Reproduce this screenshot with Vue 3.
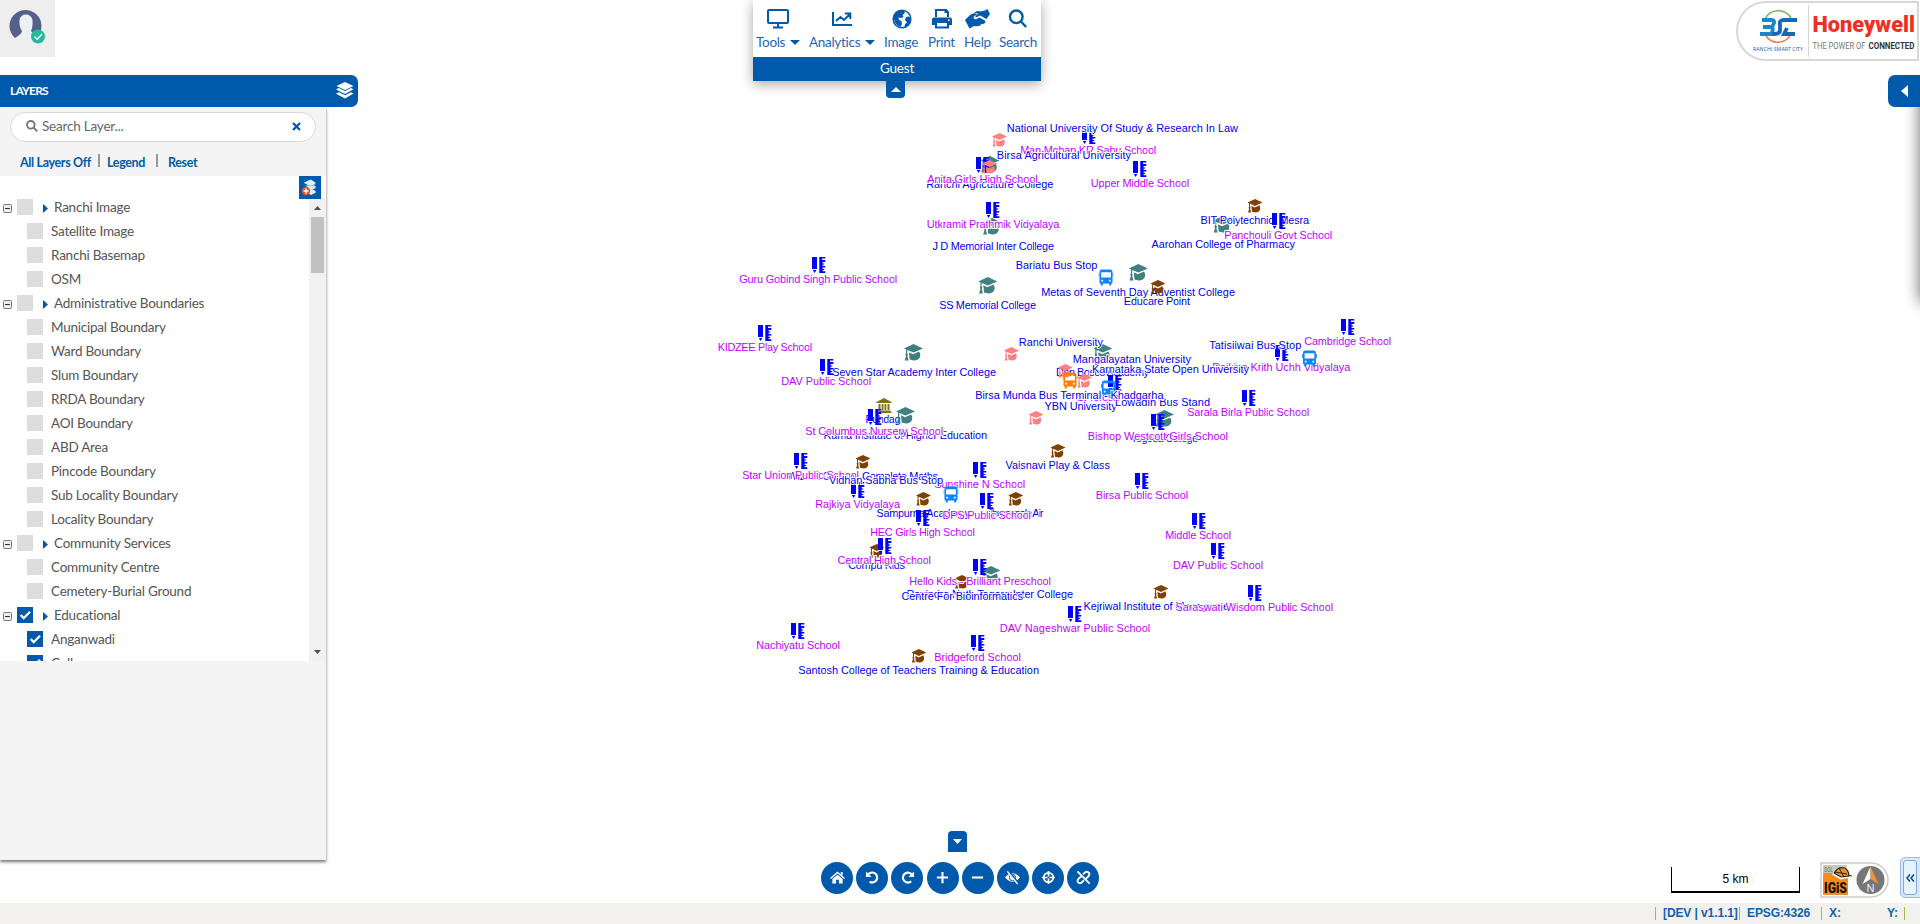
<script setup>
const tree = [
  { name: 'Ranchi Image', items: ['Satellite Image', 'Ranchi Basemap', 'OSM'] },
  {
    name: 'Administrative Boundaries',
    items: ['Municipal Boundary', 'Ward Boundary', 'Slum Boundary', 'RRDA Boundary', 'AOI Boundary', 'ABD Area', 'Pincode Boundary', 'Sub Locality Boundary', 'Locality Boundary'],
  },
  { name: 'Community Services', items: ['Community Centre', 'Cemetery-Burial Ground'] },
  { name: 'Educational', on: true, items: ['Anganwadi', 'College'] },
]

// label, left, right, baseline
const colleges = [
  ['Ranchi Agriculture College', 926.7, 1053.3, 188],
  ['J D Memorial Inter College', 933, 1054, 250, 992],
  ['SS Memorial College', 939.7, 1036, 309],
  ['Metas of Seventh Day Adventist College', 1041.7, 1235, 296],
  ['Aarohan College of Pharmacy', 1152, 1295, 248, 1222.5],
  ['Seven Star Academy Inter College', 832.7, 996, 376, 913.5],
  ['Don Bosco Academy', 1056.5, 1149, 376],
  ['Rama Institute of Higher Education', 824, 987, 439],
  ['Yogoda College', 1131, 1198, 442],
  ['Ravindra Nath Tagore Inter College', 907, 1073, 598, 991],
]
const coaching = [
  ['BIT Polytechnic, Mesra', 1201, 1309, 224],
  ['Educare Point', 1124.3, 1190, 305, 1158],
  ['Vaisnavi Play & Class', 1006, 1110, 469],
  ['Wizard Classes Complete Maths', 788, 938, 480],
  ['Sampurna Academy', 877, 970, 517],
  ['Jhumanale Air', 988, 1043.5, 517],
  ['Compu Kids', 848.7, 905, 569],
  ['Centre For Bioinformatics', 902, 1023, 600, 962],
  ['Kejriwal Institute of Management', 1084, 1238, 610],
  ['Santosh College of Teachers Training & Education', 798.7, 1039, 674],
]
const schools = [
  ['Man Mohan KR Sahu School', 1020.7, 1156.3, 154],
  ['Anita Girls High School', 927.7, 1037.7, 183],
  ['Upper Middle School', 1091.3, 1189.3, 187],
  ['Utkramit Prathmik Vidyalaya', 927.3, 1059.3, 228],
  ['Panchouli Govt School', 1224.7, 1332.3, 239],
  ['Guru Gobind Singh Public School', 739.7, 897.3, 283],
  ['Cambridge School', 1304.7, 1391.3, 345],
  ['KIDZEE Play School', 718.3, 812.3, 351],
  ['Rajkiya Krith Uchh Vidyalaya', 1212.7, 1350.3, 371],
  ['DAV Public School', 781.7, 871.3, 385],
  ['St Teresa School', 1077, 1152, 401],
  ['Sarala Birla Public School', 1187.7, 1309.3, 416],
  ['St Columbus Nursery School', 805.7, 943.3, 435],
  ['Bishop Westcott Girls School', 1088.3, 1228, 440],
  ['Star Union Public School', 742.7, 859, 479],
  ['Sunshine N School', 934.7, 1025.3, 488],
  ['Birsa Public School', 1096.3, 1188.3, 499],
  ['Rajkiya Vidyalaya', 815.7, 900, 508],
  ['DPS Public School', 943, 1031, 519],
  ['HEC Girls High School', 870.7, 975, 536],
  ['Middle School', 1165.7, 1231.3, 539],
  ['Central High School', 838, 931, 564],
  ['DAV Public School', 1173.5, 1263.3, 569],
  ['Hello Kids - Brilliant Preschool', 909.7, 1051, 585],
  ['Saraswati Wisdom Public School', 1176, 1333.3, 611],
  ['DAV Nageshwar Public School', 1000.3, 1150.3, 632],
  ['Nachiyatu School', 756.7, 840, 649],
  ['Bridgeford School', 934.7, 1021, 661],
]
const universities = [
  ['National University Of Study & Research In Law', 1007.3, 1238, 132, 999.5],
  ['Birsa Agricultural University', 997.3, 1131, 159, 989.5],
  ['Ranchi University', 1019.3, 1103, 346, 1011.5],
  ['Mangalayatan University', 1073.3, 1191, 363, 1065.3],
  ['Karnataka State Open University', 1092.5, 1249, 373, 1084.5],
  ['YBN University', 1045, 1116.7, 410, 1036],
]
const buses = [
  ['Lowadih Bus Stand', 1115.5, 1210, 406, 1108.5, 380, '#0a84ff'],
  ['Bariatu Bus Stop', 1016.3, 1097.3, 269, 1106, 269, '#0a84ff'],
  ['Tatisilwai Bus Stop', 1209.7, 1301.3, 349, 1309.5, 350, '#0a84ff'],
  ['Vidhan Sabha Bus Stop', 829.5, 943, 484, 951, 486, '#0a84ff'],
  ['Birsa Munda Bus Terminal - Khadgarha', 975.7, 1163.5, 399, 1070, 372, '#ff8000'],
]

const mid = (p) => p[4] ?? (p[1] + p[2]) / 2
const pencils = schools.map((p) => ({ x: Math.round(mid(p) - 8), y: p[3] - 26 }))
const collegeCaps = colleges.map((p) => ({ x: mid(p) - 9.5, y: p[3] - 32 }))
const coachingCaps = coaching.map((p) => ({ x: mid(p) - 7.5, y: p[3] - 25 }))
const uniCaps = universities.map((p) => ({ x: mid(p) - 7.5, y: p[3] + 1 }))
</script>

<template>
  <div class="page">
    <svg class="map" width="1920" height="924">
      <defs>
        <symbol id="cap" viewBox="0 0 19 17" preserveAspectRatio="none">
          <path d="M9.5 0 19 4.4 9.5 8.4 3.4 5.9 3.2 9.2Q4.6 10.6 3.4 12L4.6 16.5H.7L2 12Q.8 10.6 2 9.2L2.1 5.4 0 4.4Z" />
          <path d="M5 8.3 9 10.2Q10.5 9.9 15.2 7.6Q17.2 11 15.5 14Q14 16.6 10 16.4L5.6 15.6Z" />
        </symbol>
        <symbol id="pencil" viewBox="0 0 15 17">
          <path d="M1 0H6V12H1ZM1.8 13H5.4L3.6 16ZM8.3 0H14.3V1.5H11V3H14.3V5H11.6V6.4H13.2V7.6H11.6V9H14.3V10.5H11.6V12H13.2V13H11.6V14.3H14.3V16H8.3Z" />
        </symbol>
        <symbol id="bus" viewBox="0 0 15 17">
          <path fill-rule="evenodd" d="M3 .5H12Q14 .8 14 3V13.5Q14 14.5 12.8 14.5V16Q12 17 10.6 16V14.5H4.4V16Q3 17 2.2 16V14.5Q1 14.5 1 13.5V3Q1 .8 3 .5ZM2.6 3.2V8.6H12.4V3.2ZM2.8 10.7V12.4H4.6V10.7ZM10.4 10.7V12.4H12.2V10.7Z" />
          <path d="M0 4H.8V8H0ZM14.2 4H15V8H14.2Z" />
        </symbol>
      </defs>
      <g fill="#7f7215" transform="translate(876.5 398)">
        <path d="M7.5 0 15 4V5H0V4ZM2 6H4V12H2ZM5.2 6H7V12H5.2ZM8 6H9.8V12H8ZM11 6H13V12H11ZM1 12.5H14V13.4H15V15H0V13.4H1Z" />
      </g>
      <text class="blue" x="865.5" y="423" textLength="35">Pundag</text>
      <use v-for="(c, i) in collegeCaps" :key="'k' + i" href="#cap" :x="c.x" :y="c.y" width="19" height="17" fill="#408080" />
      <text v-for="(p, i) in colleges" :key="'c' + i" class="blue" :x="p[1] - 0.5" :y="p[3]" :textLength="p[2] - p[1] + 0.5">{{ p[0] }}</text>
      <text v-for="(p, i) in coaching" :key="'b' + i" class="blue" :x="p[1] - 0.5" :y="p[3]" :textLength="p[2] - p[1] + 0.5">{{ p[0] }}</text>
      <use v-for="(c, i) in coachingCaps" :key="'m' + i" href="#cap" :x="c.x" :y="c.y" width="15" height="14" fill="#804000" />
      <use v-for="(c, i) in pencils" :key="'p' + i" href="#pencil" :x="c.x" :y="c.y" width="15" height="17" fill="#0000ff" />
      <text v-for="(p, i) in schools" :key="'s' + i" class="violet" :x="p[1] - 0.5" :y="p[3]" :textLength="p[2] - p[1] + 0.5">{{ p[0] }}</text>
      <use v-for="(c, i) in uniCaps" :key="'u' + i" href="#cap" :x="c.x" :y="c.y" width="15" height="14" fill="#ff8080" />
      <text v-for="(p, i) in universities" :key="'v' + i" class="blue" :x="p[1] - 0.5" :y="p[3]" :textLength="p[2] - p[1] + 0.5">{{ p[0] }}</text>
      <template v-for="(p, i) in buses" :key="'d' + i">
        <use href="#bus" :x="p[4] - 7.5" :y="p[5]" width="15" height="17" :fill="p[6]" />
        <text class="blue" :x="p[1] - 0.5" :y="p[3]" :textLength="p[2] - p[1] + 0.5">{{ p[0] }}</text>
      </template>
    </svg>

    <div class="user">
      <svg width="55" height="57" viewBox="0 0 55 57">
        <circle cx="26" cy="26" r="16" fill="#edf0f1" />
        <path d="M15 38A16 16 0 1 1 37 37L31 31Q33 27 32.500 20Q31 14.500 26 14.500Q20.500 14.500 19.500 20Q19 27 22 31Q22 34 15 38Z" fill="#55618a" />
        <circle cx="38" cy="36.500" r="7" fill="#27b99a" />
        <path d="m34.500 36.500 2.800 2.800 4.700-5.300" fill="none" stroke="#e9f8f4" stroke-width="1.500" />
      </svg>
    </div>

    <aside class="layers">
      <header>
        <b>LAYERS</b>
        <svg width="18" height="17" viewBox="0 0 18 17" fill="#fff">
          <path d="M9 0 17.500 4 9 8 .5 4ZM.5 7 3 6.100 9 9 15 6.100 17.500 7.200 9 12 .5 7.800ZM.5 11.200 3 10.300 9 13.200 15 10.300 17.500 11.400 9 16.500 .5 12Z" />
        </svg>
      </header>
      <div class="panel">
        <div class="search">
          <svg width="12" height="12" viewBox="0 0 12 12" fill="none" stroke="#777" stroke-width="1.900"><circle cx="4.800" cy="4.800" r="3.800" /><path d="m7.600 7.600 3.700 3.700" /></svg>
          <span>Search Layer...</span>
          <svg class="clear" width="9" height="9" viewBox="0 0 9 9" stroke="#005aab" stroke-width="2.300"><path d="m1 1 7 7M8 1 1 8" /></svg>
        </div>
        <nav class="links"><b>All Layers Off</b><i></i><b>Legend</b><i></i><b>Reset</b></nav>
        <div class="strip">
          <div class="add">
            <svg width="22" height="23" viewBox="0 0 22 23">
              <path d="M10 4.500 17 8 12 9.500 5 7Z" fill="#fff" />
              <path d="M6 9.500 12 13 17 10.500 15 9.500M7 14 12 18.500 17 15.500 14 13.500M10 16 12 18.500" fill="#d6edf8" />
              <path d="M5 6.500 12 3.500 17 7 10 9.800ZM7 11.500 15 9.500 17 12 11 14.500ZM8 16 15 14.500 17 16.500 12 19Z" fill="#d9f0fa" />
              <circle cx="7" cy="15" r="4.200" fill="#e8502a" />
              <path d="M7 12.500V17.500M4.500 15H9.500" stroke="#fff" stroke-width="1.500" />
            </svg>
          </div>
        </div>
        <div class="tree">
          <div class="rows">
            <template v-for="g in tree" :key="g.name">
              <div class="row group">
                <svg class="toggle" width="9" height="9" viewBox="0 0 9 9"><rect x=".5" y=".5" width="8" height="8" rx="1" fill="#eee" stroke="#777" /><path d="M2 4.500H7" stroke="#333" /></svg>
                <span class="box" :class="{ on: g.on }"><svg v-if="g.on" width="16" height="16" viewBox="0 0 16 16"><path d="m3.700 8 3 3.200L13 4.800" /></svg></span>
                <svg class="arrow" width="5" height="9" viewBox="0 0 5 9"><path d="M0 0 5 4.500 0 9Z" fill="#005aab" /></svg>
                <span class="label">{{ g.name }}</span>
              </div>
              <div v-for="n in g.items" :key="n" class="row child">
                <span class="box" :class="{ on: g.on }"><svg v-if="g.on" width="16" height="16" viewBox="0 0 16 16"><path d="m3.700 8 3 3.200L13 4.800" /></svg></span>
                <span class="label">{{ n }}</span>
              </div>
            </template>
          </div>
          <div class="scroll">
            <svg width="7" height="4"><path d="M0 4 3.500 0 7 4Z" fill="#505050" /></svg>
            <div class="thumb"></div>
            <svg class="down" width="7" height="4"><path d="M0 0H7L3.500 4Z" fill="#505050" /></svg>
          </div>
        </div>
      </div>
    </aside>

    <div class="menu">
      <div class="tools">
        <div>
          <svg width="22" height="20" viewBox="0 0 22 20" fill="none" stroke="#005aab" stroke-width="2"><rect x="1" y="1" width="20" height="13" rx="1" /><path d="M11 14V18M6 18.500H16" /></svg>
          <span>Tools<em></em></span>
        </div>
        <div>
          <svg width="20" height="18" viewBox="0 0 20 18" fill="none" stroke="#005aab" stroke-width="2"><path d="M1 2V15H20M4 11 8.500 7 12 10 17.500 4.500M12.800 3.500H18.300V9" /></svg>
          <span>Analytics<em></em></span>
        </div>
        <div>
          <svg width="20" height="20" viewBox="0 0 20 20"><circle cx="10" cy="10" r="8.800" fill="#fff" stroke="#005aab" stroke-width="1.600" /><path d="M2 10Q1 3 8 1.500L12 2 13 4 10.500 6 11.500 8 9 9 6.500 8.500 7 11 9.500 12 10 15 8.500 18Q3 16 2 10ZM14 8 17 7.500 19 10Q18 17 12.500 18.500L13 15 15 13.500 13 11Z" fill="#005aab" /></svg>
          <span>Image</span>
        </div>
        <div>
          <svg width="20" height="20" viewBox="0 0 20 20"><path fill-rule="evenodd" fill="#005aab" d="M3 0H14.500L17 2.800V8H15V4H12.500V2H5V8H3ZM2 8.500H18Q20 8.500 20 10.500V16H17V19.500H3V16H0V10.500Q0 8.500 2 8.500ZM5 14V17.500H15V14ZM16 10.500V12H17.600V10.500Z" /></svg>
          <span>Print</span>
        </div>
        <div>
          <svg width="25" height="20" viewBox="0 0 25 20"><path fill="#005aab" d="M0 11 5 6Q9 3 12 5L8.500 8Q8.500 11 11.500 10L14.500 8.500 20.500 12Q20.500 15.500 16.500 15Q15 18 9 17L4.500 19.500Z" /><path fill="#005aab" d="M9 4Q12 1 15 2.500L20 1.500 22.500 0 25 5 21.500 10 15 6.500 11 8.500Q9.500 8 11 6.500L13.500 4.500Z" /></svg>
          <span>Help</span>
        </div>
        <div>
          <svg width="19" height="20" viewBox="0 0 19 20" fill="none" stroke="#005aab" stroke-width="2.400"><circle cx="8.300" cy="7.800" r="6.300" /><path d="m12.800 12.300 5.300 5.700" /></svg>
          <span>Search</span>
        </div>
      </div>
      <div class="guest">Guest</div>
      <div class="tab"><svg width="10" height="5"><path d="M0 5 5 0 10 5Z" fill="#fff" /></svg></div>
    </div>

    <div class="brand">
      <svg width="184" height="62" viewBox="0 0 184 62">
        <path d="M183 2H31A29 29 0 0 0 31 60H183Z" fill="#fff" stroke="#d8d8d8" stroke-width="2" />
        <path d="M30 19A14.800 14.800 0 0 1 56 18" fill="none" stroke="#76b856" stroke-width="1.600" />
        <path d="M31 36A14.500 14.500 0 0 0 56 34" fill="none" stroke="#ed7b43" stroke-width="1.600" />
        <path d="M27 20H36Q40 20 39 23L37 27H28M37 27Q39 30 36 34H25" fill="none" stroke="#1787ce" stroke-width="3.800" />
        <path d="M62 20H49Q44 20 45 24L45 30Q45 34 39 34H37M52 28 49 34H60" fill="none" stroke="#1669b5" stroke-width="3.800" />
        <text x="18" y="50.500" class="city" textLength="50" lengthAdjust="spacingAndGlyphs">RANCHI SMART CITY</text>
        <path d="M73.500 5V57" stroke="#d5d5d5" />
        <text x="77.500" y="31.500" class="honey" textLength="102.500" lengthAdjust="spacingAndGlyphs">Honeywell</text>
        <text x="77.500" y="49" class="power" textLength="53" lengthAdjust="spacingAndGlyphs">THE POWER OF</text>
        <text x="133.500" y="49" class="power strong" textLength="46" lengthAdjust="spacingAndGlyphs">CONNECTED</text>
      </svg>
    </div>

    <div class="drawer"></div>
    <div class="drawer-tab"><svg width="7" height="12"><path d="M7 0V12L0 6Z" fill="#fff" /></svg></div>

    <div class="bottom">
      <div class="tab up"><svg width="9" height="5"><path d="M0 0H9L4.500 5Z" fill="#fff" /></svg></div>
      <div class="circles">
        <span><svg viewBox="0 0 16 16"><path d="M8 1.500 16 8.500 15 9.500 8 3.800 1 9.500 0 8.500ZM11.500 2H13.500V6L11.500 4.200ZM8 5 13.500 9.500V14.500H9.500V10.500H6.500V14.500H2.500V9.500Z" fill="#fff" /></svg></span>
        <span><svg viewBox="0 0 16 16"><path d="M3 5.500A5.300 5.300 0 1 1 5 12.500" fill="none" stroke="#fff" stroke-width="2.300" /><path d="M1 1.500V7.500H7Z" fill="#fff" /></svg></span>
        <span><svg viewBox="0 0 16 16"><path d="M13 5.500A5.300 5.300 0 1 0 12 12" fill="none" stroke="#fff" stroke-width="2.300" /><path d="M15 1.500V7.500H9Z" fill="#fff" /></svg></span>
        <span><svg viewBox="0 0 16 16"><path d="M8 2V14M2 8H14" stroke="#fff" stroke-width="2.200" /></svg></span>
        <span><svg viewBox="0 0 16 16"><path d="M2 8H14" stroke="#fff" stroke-width="2.200" /></svg></span>
        <span><svg viewBox="0 0 16 16"><path d="M0 8Q8-1 16 8Q8 17 0 8Z" fill="#fff" /><circle cx="8" cy="8" r="3.400" fill="none" stroke="#005aab" /><path d="M3.500 1 14.500 15" stroke="#005aab" stroke-width="2.800" /><path d="M2.500 1.500 13.500 15" stroke="#fff" stroke-width="1.500" /></svg></span>
        <span><svg viewBox="0 0 16 16" fill="none" stroke="#fff"><circle cx="8" cy="8" r="5" stroke-width="2" /><path d="M8 1V7M8 9V15M1 8H7M9 8H15" stroke-width="1.800" /></svg></span>
        <span><svg viewBox="0 0 16 16" fill="none" stroke="#fff" stroke-width="2"><path d="M7.500 4.500 9.500 2.700Q12 1 14 3.200Q15 5.500 12.500 7.500L10.500 9.500M8.500 11 6 13.300Q3.500 15 1.800 12.500Q1 10.500 3.500 8.500L6 6.500M1.500 1.500 14.500 14.500" /></svg></span>
      </div>
    </div>

    <div class="scale">5 km</div>

    <div class="north">
      <svg width="70" height="36" viewBox="0 0 70 36">
        <path d="M1 1H51A17 17 0 0 1 51 35H1Z" fill="#fff" stroke="#ccc" stroke-width="1.500" />
        <path d="M3 3H27V11H3Z" fill="#c9c8b8" /><path d="M3 11H28V33H3Z" fill="#f68b1f" />
        <text x="4" y="10" class="sgl" textLength="9" lengthAdjust="spacingAndGlyphs">SGL</text>
        <path d="M14 12Q18 4 26 7L30 14 21 16Z" fill="#fff" stroke="#fff" stroke-width="3" />
        <path d="M14 11Q18 4 25 6Q29 9 29 14L21 15Z" fill="#e9932e" stroke="#2c2118" stroke-width="1.200" />
        <path d="M15 10 27 12M19 6 24 15M28 13 32 14" stroke="#2c2118" fill="none" />
        <text x="4" y="31" class="igis" textLength="23" lengthAdjust="spacingAndGlyphs">IGiS</text>
        <circle cx="50.500" cy="18" r="14" fill="#767676" />
        <path d="M50.500 4.500 42.500 22 50.500 17Z" fill="#fff" /><path d="M50.500 4.500 58.500 22 50.500 17Z" fill="#f0923a" />
        <text x="46.500" y="30" class="n">N</text>
      </svg>
    </div>
    <div class="collapse"><span><svg width="9" height="8" fill="none" stroke="#15428b" stroke-width="1.500"><path d="M4 .5 1 4 4 7.500M8 .5 5 4 8 7.500" /></svg></span></div>

    <footer>
      <b class="dev">[DEV | v1.1.1]</b><b class="epsg">EPSG:4326</b><b class="x">X:</b><b class="y">Y:</b>
    </footer>
  </div>
</template>

<style>
html, body { margin: 0; overflow: hidden; background: #fff; }
</style>

<style scoped>
* { box-sizing: border-box; }
.page { position: relative; width: 1920px; height: 924px; overflow: hidden; background: #fff; font-family: Lato, "Open Sans", sans-serif; }
svg { display: block; flex: none; }
.map { position: absolute; left: 0; top: 0; }
.map text { font: 11px "Liberation Sans", Arial, sans-serif; paint-order: stroke; stroke: #fff; stroke-width: 1.800px; }
.blue { fill: #0000e6; }
.violet { fill: #bf00ff; }
.user { position: absolute; left: 0; top: 0; width: 55px; height: 57px; background: #eee; }

.layers { position: absolute; left: 0; top: 75px; width: 358px; }
.layers header { height: 32px; background: #005aab; border-radius: 0 7px 7px 0; display: flex; align-items: center; justify-content: space-between; padding: 0 4px 2px 10px; color: #fff; font-size: 12px; }
.layers header b { letter-spacing: -0.800px; }
.panel { width: 326px; height: 753px; background: #f4f4f4; box-shadow: 0 2px 3px rgba(0, 0, 0, .55); padding-top: 5px; }
.search { width: 306px; height: 30px; margin-left: 10px; border: 1px solid #d8d8d8; border-radius: 15px; background: #fff; display: flex; align-items: center; padding: 0 14px 2px 15px; color: #666; font-size: 13.500px; letter-spacing: -0.200px; }
.search span { margin-left: 4px; flex: 1; }
.links { display: flex; align-items: center; height: 34px; padding: 6px 0 0 20px; font-size: 12.500px; letter-spacing: -0.350px; color: #005aab; white-space: nowrap; }
.links b:nth-of-type(1) { width: 78px; }
.links b:nth-of-type(2) { width: 49px; }
.links i { width: 2px; height: 13px; background: #999; margin-right: 7px; margin-top: -4px; }
.links i:nth-of-type(2) { margin-right: 10px; }
.strip { height: 23px; background: #fff; display: flex; justify-content: flex-end; padding-right: 5px; }
.add { width: 22px; height: 23px; background: #005aab; }
.tree { height: 462px; background: #fff; display: flex; overflow: hidden; }
.rows { width: 309px; }
.row { height: 24px; display: flex; align-items: flex-start; color: #555; font-size: 13.500px; line-height: 17px; letter-spacing: -0.230px; white-space: nowrap; }
.group { padding-left: 3px; }
.child { padding-left: 27px; }
.toggle { margin: 5px 5px 0 0; }
.box { width: 16px; height: 16px; background: #ddd; flex: none; }
.box.on { background: #005aab; }
.box path { fill: none; stroke: #fff; stroke-width: 2.3; }
.arrow { margin: 5px 6px 0 10px; }
.child .label { margin-left: 8px; }
.scroll { width: 17px; background: #f1f1f1; display: flex; flex-direction: column; align-items: center; padding: 7px 0; }
.thumb { width: 13px; height: 56px; background: #c1c1c1; margin-top: 7px; }
.down { margin-top: auto; }

.menu { position: absolute; left: 753px; top: 0; width: 288px; height: 81px; background: #fff; box-shadow: 0 3px 12px rgba(0, 0, 0, .35); }
.tools { height: 57px; display: grid; grid-template-columns: 44px 66px 35px 27px 26px 37px; column-gap: 9px; padding: 9px 0 0 3px; }
.tools div { display: flex; flex-direction: column; align-items: center; }
.tools svg { height: 20px; }
.tools span { margin-top: 5px; font-size: 13.500px; line-height: 17px; color: #1f68b1; white-space: nowrap; letter-spacing: -0.300px; align-self: flex-start; display: flex; width: 100%; justify-content: space-between; align-items: center; }
.tools em { border: 5px solid transparent; border-top-color: #005aab; border-bottom: 0; }
.guest { height: 24px; background: #005aab; color: #fff; text-align: center; font-size: 13.500px; line-height: 22px; letter-spacing: -0.200px; }
.tab { width: 19px; height: 17px; background: #005aab; display: flex; align-items: center; justify-content: center; border-radius: 0 0 4px 4px; margin-left: 133px; }
.tab.up { border-radius: 4px 4px 0 0; height: 21px; margin-left: 127px; }

.brand { position: absolute; left: 1735px; top: 0; }
.city { font: 5.500px "Open Sans", sans-serif; fill: #2a5ca8; }
.honey { font: 900 22px Roboto, sans-serif; fill: #ee3124; }
.power { font: 9.500px Roboto, sans-serif; fill: #777; }
.strong { font-weight: 700; fill: #333; }

.drawer { position: absolute; left: 1920px; top: 85px; width: 20px; height: 217px; box-shadow: 0 0 16px rgba(0, 0, 0, .6); }
.drawer-tab { position: absolute; left: 1888px; top: 75px; width: 32px; height: 32px; border-radius: 7px 0 0 7px; background: #005aab; display: flex; align-items: center; justify-content: center; }

.bottom { position: absolute; left: 821px; top: 831px; }
.circles { display: flex; gap: 3.200px; margin-top: 10px; }
.circles span { width: 32px; height: 32px; border-radius: 50%; background: #005aab; display: flex; align-items: center; justify-content: center; }
.circles svg { width: 15px; height: 15px; margin-top: -2px; }

.scale { position: absolute; left: 1671px; top: 867px; width: 129px; height: 26px; border: solid #000; border-width: 0 1px 2px; text-align: center; font: 12px/24px "Liberation Sans", Arial, sans-serif; color: #000; }
.north { position: absolute; left: 1820px; top: 862px; }
.sgl { font: 7px "Liberation Sans", sans-serif; fill: #666; }
.igis { font: 900 14px Roboto, sans-serif; fill: #17110b; }
.n { font: 11px "Liberation Sans", sans-serif; fill: #eee; }
.collapse { position: absolute; left: 1900px; top: 857px; width: 24px; height: 41px; border: 1px solid #99bbe8; border-radius: 5px; background: #dce8f8; padding: 2px; }
.collapse span { display: flex; width: 14px; height: 35px; border: 1px solid #7da9e3; border-radius: 3px; background: #e5f5fe; align-items: center; justify-content: center; }

footer { position: absolute; left: 0; bottom: 0; width: 1920px; height: 21px; background: #f2f1ee; display: flex; justify-content: flex-end; align-items: center; padding-right: 15px; color: #0f62ae; font: 12px "Liberation Sans", Arial, sans-serif; letter-spacing: -0.100px; }
footer b { height: 13px; line-height: 13px; border-left: 1px solid #9cb94e; padding-left: 7px; white-space: nowrap; }
.dev { width: 84px; }
.epsg { width: 82px; }
.x { width: 58px; }
footer .y { border-left: 0; border-right: 1px solid #9cb94e; width: 26px; padding-left: 8px; }
</style>
